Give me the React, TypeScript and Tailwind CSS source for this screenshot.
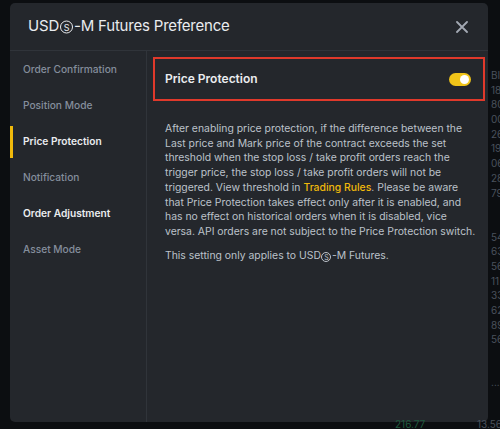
import React from 'react';

const menu = [
  { label: 'Order Confirmation', active: false, bright: false },
  { label: 'Position Mode', active: false, bright: false },
  { label: 'Price Protection', active: true, bright: true },
  { label: 'Notification', active: false, bright: false },
  { label: 'Order Adjustment', active: false, bright: true },
  { label: 'Asset Mode', active: false, bright: false },
];

const sideNums = ['BI', '18', '80', '00', '26', '19', '06', '28', '79', '', '', '54', '63', '56', '11', '33', '62', '89', '56'];

// circled S as used in "USDⓈ-M"
const CircS: React.FC<{ big?: boolean }> = ({ big }) => (
  <span
    className={`inline-flex items-center justify-center rounded-full border border-current align-baseline ${
      big ? 'w-[13px] h-[13px] text-[9px] mx-[1px] translate-y-[0.5px]' : 'w-[10px] h-[10px] text-[7px] mx-[0.5px] translate-y-[1px]'
    }`}
  >
    <span className="leading-none">S</span>
  </span>
);

const App: React.FC = () => {
  return (
    <div
      className="relative w-[500px] h-[429px] overflow-hidden bg-[#0c0e11] flex"
      style={{ fontFamily: 'Inter, "Noto Sans", sans-serif' }}
    >
      {/* Modal */}
      <div className="ml-[10px] mt-[3px] w-[478px] h-[419px] bg-[#24272c] rounded-[5px] flex flex-col shrink-0">
        {/* Header */}
        <div className="h-[48px] flex items-center justify-between pl-[18px] pr-[20px] border-b border-[#30343a]">
          <span className="text-[15px] tracking-[-0.2px] text-[#eaecef] flex items-center">
            USD<CircS big />-M Futures Preference
          </span>
          <svg width="12" height="12" viewBox="0 0 12 12" className="mt-[1px]">
            <path d="M1 1L11 11M11 1L1 11" stroke="#a3a9b3" strokeWidth="1.8" strokeLinecap="round" />
          </svg>
        </div>

        <div className="flex flex-1">
          {/* Sidebar */}
          <div className="w-[137px] border-r border-[#30343a] pt-[1px]">
            {menu.map((m) => (
              <div key={m.label} className="relative h-[36px] flex items-center pl-[13px]">
                {m.active && <div className="absolute left-0 top-[2px] w-[3px] h-[32px] bg-[#f0b90b]" />}
                <span
                  className={`text-[10.2px] ${m.bright ? 'text-[#eaecef] font-semibold' : 'text-[#848e9c] font-medium'}`}
                >
                  {m.label}
                </span>
              </div>
            ))}
          </div>

          {/* Content */}
          <div className="flex-1 pl-[6px] pr-[3px] pt-[6px]">
            <div className="h-[44px] border-2 border-[#e0392b] flex items-center justify-between pl-[10px] pr-[12px]">
              <span className="text-[12px] font-semibold text-[#eaecef]">Price Protection</span>
              <div className="w-[22px] h-[13px] rounded-full bg-[#f0c419] flex items-center justify-end pr-[2px]">
                <div className="w-[9px] h-[9px] rounded-full bg-white" />
              </div>
            </div>
            <div className="pl-[12px] pr-[6px] pt-[21px] text-[10.4px] leading-[14.7px] text-[#bcc2ca]">
              <p>
                After enabling price protection, if the difference between the Last price and Mark price of the contract
                exceeds the set threshold when the stop loss / take profit orders reach the trigger price, the stop loss /
                take profit orders will not be triggered. View threshold in{' '}
                <span className="text-[#f0b90b] font-medium">Trading Rules</span>. Please be aware that Price Protection
                takes effect only after it is enabled, and has no effect on historical orders when it is disabled, vice
                versa. API orders are not subject to the Price Protection switch.
              </p>
              <p className="mt-[9px]">
                This setting only applies to USD<CircS />-M Futures.
              </p>
            </div>
          </div>
        </div>
      </div>

      {/* Background chart scale */}
      <div className="ml-[3px] pt-[68px] flex flex-col text-[10px] leading-[14.7px] text-[#4a515c]">
        {sideNums.map((n, i) => (
          <span key={i} className="h-[14.7px]">{n}</span>
        ))}
        <span className="mt-[28px]">...</span>
      </div>
      <span className="absolute left-[395px] bottom-[-3px] text-[10px] text-[#1f5a3f]">216.77</span>
      <span className="absolute right-[-2px] bottom-[-3px] text-[10px] text-[#4a515c]">13.56</span>
    </div>
  );
};

export default App;
